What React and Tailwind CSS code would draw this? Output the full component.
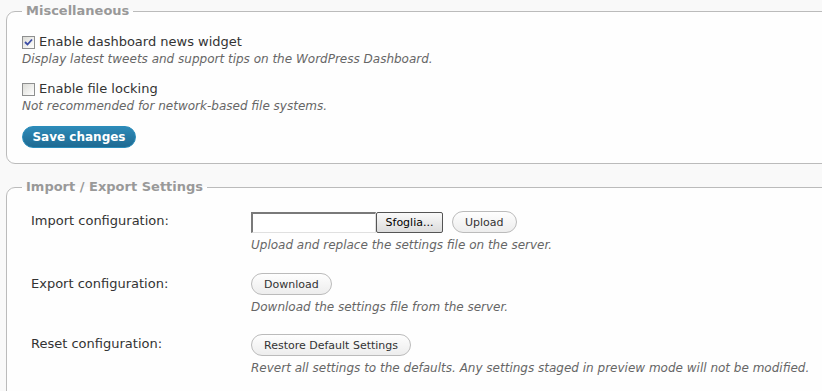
import React from "react";

const font = { fontFamily: '"DejaVu Sans", Verdana, sans-serif' };

function Check({ checked }) {
  return (
    <span className="inline-flex w-[13px] h-[13px] shrink-0 items-center justify-center border border-[#8e8f8f] bg-gradient-to-br from-[#dcdcd7] to-[#ffffff]">
      {checked && (
        <svg width="9" height="9" viewBox="0 0 9 9">
          <path d="M1 4 L3.5 6.5 L8 1.5" fill="none" stroke="#3b4ca5" strokeWidth="1.8" />
        </svg>
      )}
    </span>
  );
}

function Pill({ children }) {
  return (
    <button className="h-[22px] px-[12px] rounded-full border border-[#bbb] bg-gradient-to-b from-[#fefefe] to-[#ededed] text-[11px] text-[#333] leading-none">
      {children}
    </button>
  );
}

function Legend({ children }) {
  return (
    <legend className="px-[4px] text-[13px] font-bold text-[#999] leading-[16px]">
      {children}
    </legend>
  );
}

export default function App() {
  return (
    <div className="w-[822px] h-[391px] overflow-hidden bg-[#f9f9f9] pt-[3px] pl-[6px]" style={font}>
      <fieldset className="w-[840px] border border-[#bbb] rounded-l-[9px] bg-[#fefefe] pl-[15px] pb-[15px]">
        <Legend>Miscellaneous</Legend>
        <div className="mt-[15px] flex items-center gap-[4px] text-[13px] text-[#333] leading-[16px]">
          <Check checked />
          <span>Enable dashboard news widget</span>
        </div>
        <p className="mt-[1px] text-[12px] italic text-[#666] leading-[16px]">
          Display latest tweets and support tips on the WordPress Dashboard.
        </p>
        <div className="mt-[14px] flex items-center gap-[4px] text-[13px] text-[#333] leading-[16px]">
          <Check />
          <span>Enable file locking</span>
        </div>
        <p className="mt-[1px] text-[12px] italic text-[#666] leading-[16px]">
          Not recommended for network-based file systems.
        </p>
        <button className="mt-[12px] h-[22px] w-[114px] rounded-full border border-[#298cba] bg-gradient-to-b from-[#2e8ab8] to-[#1e6a92] text-[12px] font-bold text-white leading-none">
          Save changes
        </button>
      </fieldset>

      <fieldset className="mt-[15px] w-[840px] h-[260px] border border-[#bbb] rounded-l-[9px] bg-[#fefefe] pl-[15px]">
        <Legend>Import / Export Settings</Legend>
        <div className="mt-[16px] grid grid-cols-[229px_1fr] gap-y-[20px] text-[13px] text-[#333]">
          <div className="pl-[9px] pt-[2px] leading-[16px]">Import configuration:</div>
          <div>
            <div className="flex items-center">
              <span className="w-[125px] h-[21px] border-t-2 border-l-2 border-[#7a7a7a] border-r border-b border-r-[#e0e0e0] border-b-[#e0e0e0] bg-white"></span>
              <button className="h-[21px] w-[67px] rounded-[2px] border border-[#555] bg-gradient-to-b from-[#fafafa] to-[#dcdcdc] text-[11px] text-black leading-none">
                Sfoglia...
              </button>
              <span className="ml-[9px]">
                <Pill>Upload</Pill>
              </span>
            </div>
            <p className="mt-[4px] text-[12px] italic text-[#666] leading-[16px]">
              Upload and replace the settings file on the server.
            </p>
          </div>

          <div className="pl-[9px] pt-[3px] leading-[16px]">Export configuration:</div>
          <div>
            <Pill>Download</Pill>
            <p className="mt-[4px] text-[12px] italic text-[#666] leading-[16px]">
              Download the settings file from the server.
            </p>
          </div>

          <div className="pl-[9px] pt-[2px] -mt-[1px] leading-[16px]">Reset configuration:</div>
          <div className="-mt-[1px]">
            <Pill>Restore Default Settings</Pill>
            <p className="mt-[4px] text-[12px] italic text-[#666] leading-[16px]">
              Revert all settings to the defaults. Any settings staged in preview mode will not be modified.
            </p>
          </div>
        </div>
      </fieldset>
    </div>
  );
}
